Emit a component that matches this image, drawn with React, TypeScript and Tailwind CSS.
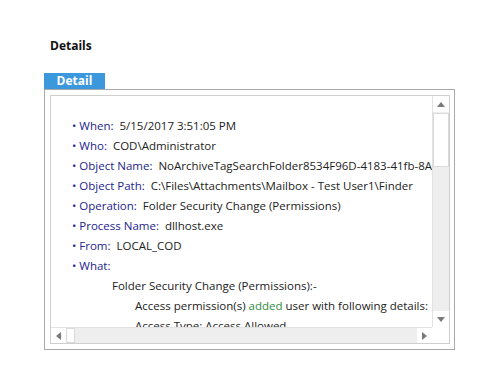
const font = { fontFamily: '"Segoe UI", "Open Sans", "Noto Sans", sans-serif' };

type Row = { label: string; value?: string };

const rows: Row[] = [
  { label: 'When:', value: '5/15/2017 3:51:05 PM' },
  { label: 'Who:', value: 'COD\\Administrator' },
  { label: 'Object Name:', value: 'NoArchiveTagSearchFolder8534F96D-4183-41fb-8A04-7E1C2B9F0D33' },
  { label: 'Object Path:', value: 'C:\\Files\\Attachments\\Mailbox - Test User1\\Finder' },
  { label: 'Operation:', value: 'Folder Security Change (Permissions)' },
  { label: 'Process Name:', value: 'dllhost.exe' },
  { label: 'From:', value: 'LOCAL_COD' },
  { label: 'What:' },
];

function Arrow({ dir }: { dir: 'up' | 'down' | 'left' | 'right' }) {
  const pts = {
    up: '4,0 8,5 0,5',
    down: '0,0 8,0 4,5',
    left: '5,0 5,8 0,4',
    right: '0,0 5,4 0,8',
  }[dir];
  const vertical = dir === 'up' || dir === 'down';
  return (
    <svg width={vertical ? 8 : 5} height={vertical ? 5 : 8} viewBox={vertical ? '0 0 8 5' : '0 0 5 8'}>
      <polygon points={pts} fill="#7a7a7a" />
    </svg>
  );
}

export default function App() {
  return (
    <div className="w-[500px] h-[390px] bg-white overflow-hidden" style={font}>
      <div className="pt-[38px] pl-[50px] text-[12px] font-bold text-[#111] leading-[16px]">Details</div>
      <div className="ml-[44px] mt-[19px] w-[61px] h-[16px] bg-[#3c98dc] text-white text-[12px] font-bold leading-[16px] text-center">
        Detail
      </div>
      <div className="ml-[44px] w-[411px] h-[261px] border border-[#a9a9a9] pt-[5px] pl-[5px] pr-[4px] pb-[5px]">
        <div className="w-full h-full border border-[#cfcfcf] flex flex-col">
          <div className="flex flex-1 min-h-0">
            <div className="flex-1 min-w-0 overflow-hidden pt-[20px] pl-[21px] text-[11.5px] leading-[20px] text-[#222] whitespace-pre">
              {rows.map((r) => (
                <div key={r.label}>
                  <span className="text-[#1c248c]">• {r.label}</span>
                  {r.value ? '  ' + r.value : ''}
                </div>
              ))}
              <div className="pl-[40px]">Folder Security Change (Permissions):-</div>
              <div className="pl-[63px]">
                Access permission(s) <span className="text-[#2e8b3e]">added</span> user with following details:
              </div>
              <div className="pl-[63px]">Access Type: Access Allowed</div>
            </div>
            <div className="w-[17px] flex flex-col bg-[#eeeeee] border-l border-[#e2e2e2]">
              <div className="h-[16px] bg-white flex items-center justify-center">
                <Arrow dir="up" />
              </div>
              <div className="h-[54px] mt-[1px] bg-white border border-[#dadada]" />
              <div className="flex-1" />
              <div className="h-[16px] bg-white flex items-center justify-center">
                <Arrow dir="down" />
              </div>
            </div>
          </div>
          <div className="h-[16px] flex">
            <div className="flex-1 flex bg-[#eeeeee] border-t border-[#e2e2e2]">
              <div className="w-[15px] bg-white flex items-center justify-center">
                <Arrow dir="left" />
              </div>
              <div className="w-[9px] bg-white border border-[#dadada]" />
              <div className="flex-1" />
              <div className="w-[15px] bg-white flex items-center justify-center">
                <Arrow dir="right" />
              </div>
            </div>
            <div className="w-[17px] bg-white" />
          </div>
        </div>
      </div>
    </div>
  );
}
